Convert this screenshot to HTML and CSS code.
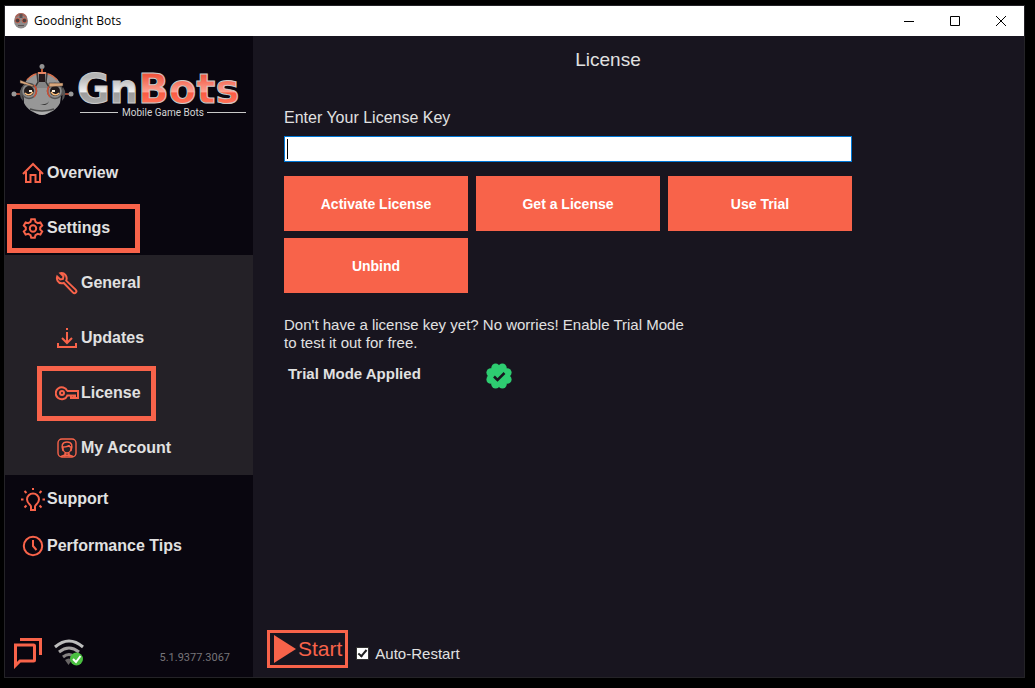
FILE: index.html
```html
<!DOCTYPE html>
<html lang="en">
<head>
    <meta charset="UTF-8">
    <meta name="viewport" content="width=device-width, initial-scale=1.0">
    <title>Goodnight Bots</title>
    <link rel="stylesheet" href="styles.css">
</head>
<body>
    <div class="window">
        <header class="titlebar">
            <svg class="app-icon" viewBox="0 0 16 16">
                <ellipse cx="8" cy="8" rx="7" ry="7.6" fill="#8d8b8b"/>
                <path d="M2 5a6 5 0 0 1 12 0L10 3H6z" fill="#a8655a"/>
                <path d="M6.500 1h3v4h-3z" fill="#5c4f4f"/>
                <circle cx="4.600" cy="7.500" r="2.300" fill="#4a4040" stroke="#c4604c"/>
                <circle cx="11.400" cy="7.500" r="2.300" fill="#4a4040" stroke="#c4604c"/>
                <path d="M5 12.500h6" stroke="#5c5555"/>
            </svg>
            <span class="app-name">Goodnight Bots</span>
            <div class="window-controls">
                <button aria-label="Minimize"><svg viewBox="0 0 10 10"><path d="M0 5.500h10"/></svg></button>
                <button aria-label="Maximize"><svg viewBox="0 0 10 10"><path d="M.5.5h9v9h-9z"/></svg></button>
                <button aria-label="Close"><svg viewBox="0 0 10 10"><path d="M0 0l10 10M10 0L0 10"/></svg></button>
            </div>
        </header>

        <div class="layout">
            <aside class="sidebar">
                <svg class="logo" viewBox="0 0 248 109" role="img" aria-label="GnBots">
                    <defs>
                        <linearGradient id="silver" x1="0" y1="0" x2="0" y2="1">
                            <stop offset="0.25" stop-color="#b5b5b5"/>
                            <stop offset="0.57" stop-color="#f2f2f2"/>
                            <stop offset="0.58" stop-color="#9b9b9b"/>
                            <stop offset="0.8" stop-color="#a8a8a8"/>
                        </linearGradient>
                        <linearGradient id="coral" x1="0" y1="0" x2="0" y2="1">
                            <stop offset="0.2" stop-color="#f0563f"/>
                            <stop offset="0.57" stop-color="#ffa596"/>
                            <stop offset="0.58" stop-color="#fb5a41"/>
                            <stop offset="0.8" stop-color="#ff7058"/>
                        </linearGradient>
                    </defs>
                    <!-- robot head -->
                    <g>
                        <path d="M37 33v7" stroke="#b9572f" stroke-width="2"/>
                        <circle cx="37" cy="30.500" r="2.500" fill="#929292"/>
                        <path d="M9 58h8M57 58h8" stroke="#d05a3c" stroke-width="1.500"/>
                        <circle cx="9" cy="58" r="2.500" fill="#999"/>
                        <circle cx="66" cy="58" r="2.500" fill="#999"/>
                        <path d="M17 51q-5 7 1 14zM58 51q5 7-1 14z" fill="#555"/>
                        <path d="M18 53C20 42 28 37 37 37s18 5 20 16l-2 14c-3 6-9 11-18 11s-15-5-18-11z" fill="#979797"/>
                        <path d="M22 44q6-7 15-7t15 7" fill="none" stroke="#d96f4b" stroke-width="1.500"/>
                        <path d="M27 73q10 4 20 0-4 6-10 6t-10-6z" fill="#b0b0b0"/>
                        <path d="M25 73q12 4 24 0" fill="none" stroke="#4b4b4b" stroke-width="1.500"/>
                        <path d="M32 37l1 9-4 6h16l-4-6 1-9z" fill="#858585"/>
                        <path d="M32 37l1 9-4 7M42 37l-1 9 4 7" fill="none" stroke="#383838" stroke-width="1.500"/>
                        <path d="M34 38h6v8h-6z" fill="#24191b"/>
                        <path d="M33 37h8" stroke="#e88663" stroke-width="2"/>
                        <circle cx="24" cy="55" r="7.500" fill="#8d8d8d" stroke="#555" stroke-width="1.500"/>
                        <circle cx="50" cy="55" r="7.500" fill="#8d8d8d" stroke="#555" stroke-width="1.500"/>
                        <path d="M29 49q5 6 0 12M45 49q-5 6 0 12" fill="none" stroke="#cf4f35" stroke-width="1.500"/>
                        <circle cx="24" cy="55" r="5" fill="#211b1c"/>
                        <circle cx="50" cy="55" r="5" fill="#211b1c"/>
                        <path d="M20 57q4 4 8-1M46 56q4 5 8 1" fill="none" stroke="#ffc27e" stroke-width="1.500"/>
                        <path d="M24 55h3M47 55h3" stroke="#f8f0df" stroke-width="2"/>
                        <path d="M15 44l13 5 1 2-14-4zM44 47h14v3l-14 1z" fill="#d9a77c" stroke="#292222" stroke-width=".5"/>
                        <path d="M35 68q7 1 9-3-2 6-9 3z" fill="#303030"/>
                    </g>
                    <text class="logo-name" x="72" y="67"><tspan fill="url(#silver)">Gn</tspan><tspan fill="url(#coral)">Bots</tspan></text>
                    <path d="M75 76.500h38M202 76.500h39" stroke="#c9c9c9"/>
                    <text class="logo-tagline" x="117" y="80">Mobile Game Bots</text>
                </svg>

                <nav class="menu">
                    <a class="menu-item" href="#">
                        <svg class="icon" viewBox="0 0 24 24"><path d="M2 13L12 3l10 10M5 11v10h4.500v-7h5v7H19V11"/></svg>
                        Overview
                    </a>
                    <a class="menu-item marked marked-settings" href="#">
                        <svg class="icon" viewBox="0 0 24 24"><path d="M10.200 3.200h3.600l.7 2.700 2.200 1.300 2.700-.8 1.800 3.100-2 1.900v2.200l2 1.900-1.800 3.100-2.700-.8-2.200 1.300-.7 2.700h-3.600l-.7-2.700-2.200-1.300-2.700.8-1.800-3.100 2-1.900v-2.200l-2-1.900 1.800-3.100 2.700.8 2.200-1.300z"/><circle cx="12" cy="12.500" r="3.200"/></svg>
                        Settings
                    </a>
                    <div class="submenu">
                        <a class="menu-item" href="#">
                            <svg class="icon" viewBox="0 0 24 24"><path d="M5.500 2.200l3 3-.6 2.700-2.700.6-3-3c-1 3 .8 6.500 4.300 6.800.8.100 1.600 0 2.300-.3l9 9.400c1 1 2.200 1 3 .2s.8-2-.2-3l-9.400-9c1.700-4.200-2-8.300-5.700-7.400z"/></svg>
                            General
                        </a>
                        <a class="menu-item" href="#">
                            <svg class="icon" viewBox="0 0 24 24"><path d="M12 2v2M12 6v11M7 12l5 5 5-5M3 17v4h18v-4"/></svg>
                            Updates
                        </a>
                        <a class="menu-item marked marked-license" href="#">
                            <svg class="icon" viewBox="0 0 24 24"><path d="M12.300 10A6 6 0 1 0 12.300 14.500H16V17h2.500v-2.500M23 10v7h-3v-2.500h-4M12 10h12"/><circle cx="7" cy="12" r="2"/></svg>
                            License
                        </a>
                        <a class="menu-item" href="#">
                            <svg class="icon thin" viewBox="0 0 24 24"><rect x="3" y="3" width="18" height="18" rx="4"/><path d="M8 15c-2-5-1-9 4-9s6 4 4 9M8 11c3 0 6-1 6-2 0 1 1 2 2 2v1c0 3-2 5-4 5s-4-2-4-5zM10 17v2l-4 1.500M14 17v2l4 1.500M9 20l3-1 3 1"/></svg>
                            My Account
                        </a>
                    </div>
                    <a class="menu-item short" href="#">
                        <svg class="icon" viewBox="0 0 24 24"><path d="M10 23v-3.500c0-1.500-4-3.200-4-7a6 6 0 0 1 12 0c0 3.800-4 5.500-4 7V23zM12 1v2M0 12.500h2.500M21.500 12.500H24M3.500 4l2 2M20.500 4l-2 2M3.500 20.500l2-2M20.500 20.500l-2-2"/></svg>
                        Support
                    </a>
                    <a class="menu-item short" href="#">
                        <svg class="icon" viewBox="0 0 24 24"><circle cx="12" cy="12" r="9.200"/><path d="M12 6v6l3.500 4"/></svg>
                        Performance Tips
                    </a>
                </nav>

                <div class="sidebar-footer">
                    <svg class="chat" viewBox="0 0 30 32"><path d="M7 2.500h20.500V18"/><path d="M2.500 8h18q1 0 1 1v14q0 1-1 1H7l-4.500 4.500z"/></svg>
                    <svg class="wifi" viewBox="0 0 32 28">
                        <path d="M2 8q14-12 28 0" stroke="#bdbdbd"/>
                        <path d="M6 13q10-8 20 0" stroke="#a5a2a2"/>
                        <path d="M10 18q6-5 12 0" stroke="#858282"/>
                        <path d="M12 21q4-3 7 0l-3.500 5z" fill="#686565"/>
                        <circle cx="23.500" cy="20" r="6.500" fill="#4abf40"/>
                        <path d="M20 20l3 3 4.500-6" stroke="#fff" stroke-width="2"/>
                    </svg>
                    <span class="version">5.1.9377.3067</span>
                </div>
            </aside>

            <main class="content">
                <h1>License</h1>

                <form class="license-form">
                    <label class="key-label" for="license-key">Enter Your License Key</label>
                    <input class="key-input" type="text" id="license-key">
                    <div class="actions">
                        <button type="button">Activate License</button>
                        <button type="button">Get a License</button>
                        <button type="button">Use Trial</button>
                        <button type="button">Unbind</button>
                    </div>
                    <p class="hint">Don't have a license key yet? No worries! Enable Trial Mode to test it out for free.</p>
                    <div class="status">
                        <span>Trial Mode Applied</span>
                        <svg viewBox="0 0 26 26">
                            <g fill="#2ecc71">
                                <circle cx="13" cy="13" r="10.500"/>
                                <circle cx="21.300" cy="16.400" r="4.300"/>
                                <circle cx="16.400" cy="21.300" r="4.300"/>
                                <circle cx="9.600" cy="21.300" r="4.300"/>
                                <circle cx="4.700" cy="16.400" r="4.300"/>
                                <circle cx="4.700" cy="9.600" r="4.300"/>
                                <circle cx="9.600" cy="4.700" r="4.300"/>
                                <circle cx="16.400" cy="4.700" r="4.300"/>
                                <circle cx="21.300" cy="9.600" r="4.300"/>
                            </g>
                            <path d="M8 13.500l3.500 3.500 7-7" fill="none" stroke="#18151f" stroke-width="2.500"/>
                        </svg>
                    </div>
                </form>

                <footer class="run-bar">
                    <button class="start" type="button">
                        <svg viewBox="0 0 22 28"><path d="M0 0l22 14L0 28z"/></svg>
                        Start
                    </button>
                    <label class="auto-restart" for="auto-restart">
                        <input type="checkbox" id="auto-restart" checked>
                        Auto-Restart
                    </label>
                </footer>
            </main>
        </div>
    </div>
</body>
</html>
```
FILE: styles.css
```css
*,
*::after {
    box-sizing: border-box;
}
body {
    margin: 0;
    min-height: 100vh;
    padding: 5px 10px 10px 4px;
    display: flex;
    background: #000;
    color: #e1e1e1;
    font-family: "Liberation Sans", Arial, sans-serif;
}
button {
    font-family: inherit;
    border: none;
    cursor: pointer;
}
.window {
    flex: 1;
    display: flex;
    flex-direction: column;
    border: 1px solid #242327;
}

/* title bar */
.titlebar {
    display: flex;
    align-items: center;
    height: 30px;
    padding-left: 8px;
    background: #fff;
    color: #000;
}
.app-icon {
    width: 16px;
    height: 16px;
}
.app-name {
    margin-left: 5px;
    font-family: "Open Sans", "Noto Sans", sans-serif;
    font-size: 12px;
    line-height: 28px;
}
.window-controls {
    display: flex;
    margin-left: auto;
}
.window-controls button {
    width: 46px;
    height: 30px;
    padding: 0;
    background: none;
}
.window-controls svg {
    display: block;
    width: 10px;
    height: 10px;
    margin: 0 auto;
    fill: none;
    stroke: #000;
}

.layout {
    flex: 1;
    display: flex;
}

/* sidebar */
.sidebar {
    width: 248px;
    display: flex;
    flex-direction: column;
    background: #09060f;
}
.logo {
    width: 248px;
    height: 109px;
}
.logo-name {
    font: bold 40px "DejaVu Sans", sans-serif;
    stroke: #c9c9c9;
    stroke-width: 1px;
}
.logo-tagline {
    font: 10px Roboto, sans-serif;
    fill: #d4d4d4;
}
.menu-item {
    position: relative;
    display: flex;
    align-items: center;
    gap: 2px;
    height: 55px;
    padding-left: 16px;
    color: #e1e1e1;
    font-size: 16px;
    font-weight: bold;
    text-decoration: none;
}
.menu-item.short {
    height: 47px;
}
.submenu {
    background: #242127;
}
.submenu .menu-item {
    padding-left: 50px;
}
.icon {
    width: 24px;
    height: 24px;
    fill: none;
    stroke: #f8634a;
    stroke-width: 2;
}
.icon.thin {
    stroke-width: 1.4;
}
.marked::after {
    content: "";
    position: absolute;
    border: 5px solid #f8634a;
}
.marked-settings::after {
    top: 4px;
    left: 2px;
    width: 133px;
    height: 49px;
}
.marked-license::after {
    top: 1px;
    left: 32px;
    width: 119px;
    height: 55px;
}
.sidebar-footer {
    display: flex;
    align-items: center;
    margin-top: auto;
    padding: 0 23px 8px 8px;
}
.chat {
    width: 30px;
    height: 32px;
    fill: none;
    stroke: #f8634a;
    stroke-width: 3;
}
.wifi {
    width: 32px;
    height: 28px;
    margin-left: 10px;
    fill: none;
    stroke-width: 3;
}
.version {
    margin-left: auto;
    padding-top: 8px;
    color: #77757a;
    font-family: Roboto, sans-serif;
    font-size: 11px;
}

/* content */
.content {
    flex: 1;
    display: flex;
    flex-direction: column;
    background: #18151f;
}
h1 {
    margin: 0;
    padding: 12px 61px 0 0;
    font-size: 19px;
    font-weight: normal;
    line-height: 24px;
    text-align: center;
}
.license-form {
    max-width: 600px;
    padding: 36px 1px 0 31px;
}
.key-label {
    display: block;
    font-size: 16px;
    line-height: 20px;
}
.key-input {
    display: block;
    width: 100%;
    height: 26px;
    margin: 8px 0 14px;
    padding: 0 4px;
    border: 1px solid #0078d7;
    outline: none;
    background: #fff linear-gradient(#000, #000) 2px center / 1px 20px no-repeat;
    font-size: 16px;
}
.actions {
    display: grid;
    grid-template-columns: repeat(3, 1fr);
    gap: 7px 8px;
}
.actions button {
    height: 55px;
    background: #f8634a;
    color: #fff;
    font-size: 14px;
    font-weight: bold;
}
.hint {
    max-width: 400px;
    margin: 23px 0 0;
    font-size: 15px;
    line-height: 18px;
}
.status {
    display: flex;
    align-items: flex-start;
    margin-top: 11px;
    padding-left: 4px;
    font-size: 15px;
    font-weight: bold;
    line-height: 22px;
}
.status span {
    width: 198px;
}
.status svg {
    width: 26px;
    height: 26px;
}
.run-bar {
    display: flex;
    align-items: center;
    gap: 8px;
    margin-top: auto;
    padding: 0 14px 9px;
}
.start {
    display: flex;
    align-items: center;
    gap: 2px;
    height: 38px;
    padding: 0 3px 0 4px;
    border: 3px solid #f8634a;
    background: none;
    color: #f8634a;
    font-size: 21px;
}
.start svg {
    width: 22px;
    height: 28px;
    fill: #f8634a;
}
.auto-restart {
    display: flex;
    align-items: center;
    gap: 6px;
    padding-top: 8px;
    font-size: 15px;
}
.auto-restart input {
    appearance: none;
    display: flex;
    justify-content: center;
    width: 13px;
    height: 13px;
    margin: 0;
    border: 1px solid #333;
    background: #fff;
}
.auto-restart input:checked::after {
    content: "";
    width: 5px;
    height: 9px;
    border: solid #222;
    border-width: 0 2px 2px 0;
    transform: rotate(40deg);
}
```
